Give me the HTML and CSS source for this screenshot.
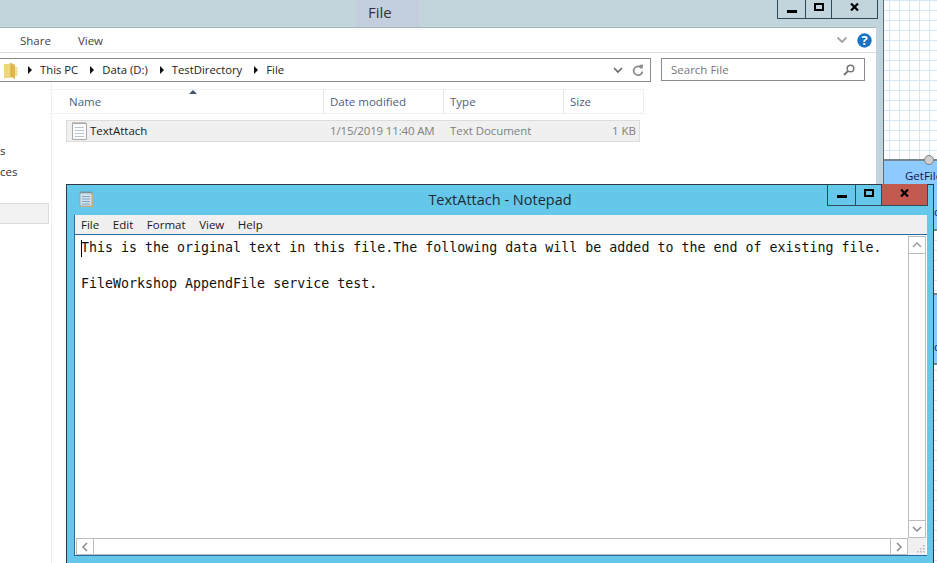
FILE: index.html
```html
<!DOCTYPE html>
<html lang="en">
<head>
<meta charset="utf-8">
<title>TextAttach - Notepad</title>
<link rel="stylesheet" href="styles.css">
</head>
<body>
<div class="desktop">
  <div class="canvas">
    <div class="node node-a"><span class="node-title">GetFile</span><span class="node-mark mark-a">c</span></div>
    <div class="node node-b"><span class="node-mark mark-b">c</span></div>
    <div class="pin"></div>
  </div>

  <section class="explorer">
    <header class="ex-title">
      <span class="ex-title-text">File</span>
      <div class="caption ex-caption">
        <span class="cap-btn cap-min"><svg width="10" height="3"><rect width="10" height="3" fill="#000"/></svg></span>
        <span class="cap-btn cap-max"><svg width="10" height="8"><rect x="1" y="1" width="8" height="6" fill="none" stroke="#000" stroke-width="2"/></svg></span>
        <span class="cap-btn cap-close"><svg width="9" height="8" viewBox="0 0 9 8"><path d="M1 0.5 L8 7.5 M8 0.5 L1 7.5" stroke="#000" stroke-width="2.2"/></svg></span>
      </div>
    </header>
    <div class="ex-body">
      <nav class="ribbon">
        <span class="tab tab-share">Share</span>
        <span class="tab tab-view">View</span>
        <svg class="rib-chevron" width="12" height="8" viewBox="0 0 12 8"><path d="M1.5 1.5 L6 6 L10.5 1.5" fill="none" stroke="#a4a4a4" stroke-width="1.8"/></svg>
        <svg class="help" width="15" height="15" viewBox="0 0 15 15"><circle cx="7.5" cy="7.5" r="7.2" fill="#1a73c4"/><text x="7.5" y="12" class="help-q" text-anchor="middle">?</text></svg>
      </nav>
      <div class="path-row">
        <div class="address">
          <svg class="folder" width="14" height="17" viewBox="0 0 14 17"><path d="M0 2 H5 L6 1 H7 V16 H1 Q0 16 0 15 Z" fill="#eed67a"/><path d="M7 1 L11 3 V17 L7 15 Z" fill="#e0b84a"/><path d="M11 5 H13.5 V14 H11 Z" fill="#f3df96"/><path d="M7 1 V15" stroke="#c9a23c" stroke-width="0.7"/></svg>
          <span class="crumbs">
            <i class="tri"></i><span>This PC</span>
            <i class="tri"></i><span>Data (D:)</span>
            <i class="tri"></i><span>TestDirectory</span>
            <i class="tri"></i><span>File</span>
          </span>
          <svg class="addr-chevron" width="10" height="7" viewBox="0 0 10 7"><path d="M1 1 L5 5 L9 1" fill="none" stroke="#666" stroke-width="1.6"/></svg>
          <svg class="refresh" width="12" height="13" viewBox="0 0 12 13"><path d="M9.6 4.2 A4.4 4.4 0 1 0 10.4 7.5" fill="none" stroke="#8a8a8a" stroke-width="1.7"/><path d="M7 1 L11 0.5 L10.6 5 Z" fill="#8a8a8a"/></svg>
        </div>
        <div class="search">
          <span class="search-text">Search File</span>
          <svg width="12" height="12" viewBox="0 0 12 12"><circle cx="7.5" cy="4.5" r="3.3" fill="none" stroke="#777" stroke-width="1.5"/><path d="M5 7 L1 11" stroke="#777" stroke-width="2"/></svg>
        </div>
      </div>
      <div class="ex-main">
        <aside class="nav-pane">
          <div class="nav-item nav-first">s</div>
          <div class="nav-item">ces</div>
          <div class="nav-selected"></div>
        </aside>
        <div class="files">
          <i class="sort-arrow"></i>
          <div class="col-head">
            <span class="col col-name">Name</span>
            <span class="col col-date">Date modified</span>
            <span class="col col-type">Type</span>
            <span class="col col-size">Size</span>
          </div>
          <div class="file-row">
            <span class="cell cell-name">
              <svg width="15" height="18" viewBox="0 0 15 18"><path d="M0.5 1.5 H14.5 V17.5 H0.5 Z" fill="#fbfbfb" stroke="#a9a9a9"/><path d="M3 5.5 H12 M3 8.5 H12 M3 11.5 H12 M3 14.5 H12" stroke="#b9c6d2"/><path d="M1 1 V0 M3 1 V0 M5 1 V0 M7 1 V0 M9 1 V0 M11 1 V0 M13 1 V0" stroke="#999"/></svg>
              <span class="file-name">TextAttach</span>
            </span>
            <span class="cell cell-date">1/15/2019 11:40 AM</span>
            <span class="cell cell-type">Text Document</span>
            <span class="cell cell-size">1 KB</span>
          </div>
        </div>
      </div>
    </div>
  </section>

  <section class="notepad">
    <header class="np-title">
      <svg class="np-icon" width="14" height="16" viewBox="0 0 14 16"><path d="M1 2 H13 V15 H1 Z" fill="#cfe4ee" stroke="#8d9ba3" stroke-width="0.8"/><path d="M13.5 3 V15.5 H2" fill="none" stroke="#c9b27f"/><path d="M3 5.5 H11 M3 8 H11 M3 10.5 H11 M3 13 H11" stroke="#7fa6bf"/><path d="M2 2 V0.5 M4 2 V0.5 M6 2 V0.5 M8 2 V0.5 M10 2 V0.5 M12 2 V0.5" stroke="#777"/></svg>
      <span class="np-title-text">TextAttach - Notepad</span>
      <div class="caption np-caption">
        <span class="cap-btn cap-min"><svg width="10" height="3"><rect width="10" height="3" fill="#000"/></svg></span>
        <span class="cap-btn cap-max"><svg width="10" height="8"><rect x="1" y="1" width="8" height="6" fill="none" stroke="#000" stroke-width="2"/></svg></span>
        <span class="cap-btn cap-close np-close"><svg width="9" height="8" viewBox="0 0 9 8"><path d="M1 0.5 L8 7.5 M8 0.5 L1 7.5" stroke="#000" stroke-width="2.2"/></svg></span>
      </div>
    </header>
    <div class="np-client">
      <div class="menu">
        <span>File</span><span>Edit</span><span>Format</span><span>View</span><span>Help</span>
      </div>
      <div class="editor">
        <div class="edit-top">
          <pre class="text"><i class="caret"></i>This is the original text in this file.The following data will be added to the end of existing file.

FileWorkshop AppendFile service test.</pre>
          <div class="vscroll">
            <span class="sb-btn sb-up"><svg width="10" height="6" viewBox="0 0 10 6"><path d="M1 5 L5 1 L9 5" fill="none" stroke="#a0a0a0" stroke-width="1.5"/></svg></span>
            <span class="sb-btn sb-down"><svg width="10" height="6" viewBox="0 0 10 6"><path d="M1 1 L5 5 L9 1" fill="none" stroke="#8a8a8a" stroke-width="1.5"/></svg></span>
          </div>
        </div>
        <div class="edit-bottom">
          <div class="hscroll">
            <span class="sb-btn sb-left"><svg width="6" height="10" viewBox="0 0 6 10"><path d="M5 1 L1 5 L5 9" fill="none" stroke="#8a8a8a" stroke-width="1.5"/></svg></span>
            <span class="sb-btn sb-right"><svg width="6" height="10" viewBox="0 0 6 10"><path d="M1 1 L5 5 L1 9" fill="none" stroke="#8a8a8a" stroke-width="1.5"/></svg></span>
          </div>
          <div class="grip"><svg width="10" height="10" viewBox="0 0 10 10"><path d="M8 1h1.5v1.5H8z M5 4h1.5v1.5H5z M8 4h1.5v1.5H8z M2 7h1.5v1.5H2z M5 7h1.5v1.5H5z M8 7h1.5v1.5H8z" fill="#b5b5b5"/></svg></div>
        </div>
      </div>
    </div>
  </section>
</div>
</body>
</html>
```

FILE: styles.css
```css
* { box-sizing: border-box; }
html, body { margin: 0; padding: 0; height: 100%; overflow: hidden; background: #fff; }
body { font-family: "Open Sans", "Noto Sans", sans-serif; font-size: 11.5px; color: #1e2a38; }
.desktop { position: relative; width: 937px; height: 563px; overflow: hidden; }

/* designer canvas behind the windows */
.canvas {
  position: absolute; left: 883px; top: 0; width: 54px; height: 563px;
  border-left: 1px solid #5c6c72;
  background-color: #fff;
  background-image:
    repeating-linear-gradient(90deg, transparent 0 5px, #d6e6f8 5px 6px, transparent 6px 10px),
    repeating-linear-gradient(0deg, transparent 0 2px, #d6e6f8 2px 3px, transparent 3px 10px);
}
.node { position: absolute; left: 0; right: 0; background: #8ccaff; border-top: 2px solid #77858f; border-bottom: 2px solid #77858f; color: #16124f; }
.node-a { top: 159px; height: 72px; }
.node-b { top: 293px; height: 72px; }
.node-title { position: absolute; left: 21px; top: 7px; font-size: 11.5px; white-space: nowrap; }
.node-mark { position: absolute; left: 50px; color: #1a10a8; font-size: 11.5px; }
.mark-a { top: 43px; }
.mark-b { top: 44px; }
.pin { position: absolute; left: 40px; top: 155px; width: 10px; height: 10px; border-radius: 50%; background: #cfcfcf; border: 1px solid #7f7f7f; }

/* explorer window */
.explorer { position: absolute; left: 0; top: 0; width: 883px; height: 563px; background: #c3d5dc; padding-right: 7px; display: flex; flex-direction: column; }
.ex-title { position: relative; height: 28px; flex: none; border-bottom: 1px solid #a6b6bd; }
.ex-title-text { position: absolute; left: 356px; top: 0; width: 63px; height: 27px; padding-left: 12px; background: #c3cfdf; color: #333; font-size: 15px; line-height: 25px; }
.caption { position: absolute; display: flex; border: 1px solid #2f4a58; border-top: 0; }
.ex-caption { left: 777px; top: 0; height: 19px; width: 101px; }
.cap-btn { display: flex; align-items: center; justify-content: center; height: 100%; }
.cap-min { width: 28px; border-right: 1px solid #2f4a58; padding-top: 4px; }
.cap-max { width: 26px; border-right: 1px solid #2f4a58; padding-bottom: 4px; }
.cap-close { flex: 1; padding-bottom: 4px; }
.ex-body { flex: 1; background: #fff; display: flex; flex-direction: column; min-height: 0; }

.ribbon { height: 25px; flex: none; border-bottom: 1px solid #dcdcdc; display: flex; align-items: center; color: #444; }
.tab-share { margin-left: 20px; }
.tab-view { margin-left: 27px; }
.rib-chevron { margin-left: auto; margin-right: 9px; }
.help { margin-right: 4px; }
.help-q { font-family: "Open Sans", sans-serif; font-size: 13px; font-weight: 700; fill: #fff; }

.path-row { display: flex; margin-top: 5px; flex: none; }
.address { width: 651px; height: 24px; border: 1px solid #8b8b8b; border-left: 0; display: flex; align-items: center; padding-left: 4px; }
.crumbs { display: flex; align-items: center; color: #222; margin-left: 10px; font-size: 11.3px; padding-bottom: 2px; }
.tri { width: 0; height: 0; border-left: 4px solid #111; border-top: 4px solid transparent; border-bottom: 4px solid transparent; margin: 2px 8px 0 0; }
.crumbs span { margin-right: 12px; }
.addr-chevron { margin-left: auto; margin-right: 9px; }
.refresh { margin-right: 6px; }
.search { width: 204px; height: 23px; margin-left: 10px; border: 1px solid #8b8b8b; display: flex; align-items: center; padding: 0 9px; justify-content: space-between; color: #777; }

.ex-main { flex: 1; display: flex; min-height: 0; position: relative; }
.nav-pane { width: 52px; flex: none; border-right: 1px solid #f0f0f0; }
.nav-item { text-align: right; padding-right: 37px; color: #333; height: 21px; line-height: 21px; white-space: nowrap; }
.nav-first { margin-top: 58px; padding-right: 47px; }
.nav-selected { height: 21px; width: 49px; margin-top: 21px; background: #f2f2f2; border: 1px solid #dcdcdc; border-left: 0; }
.files { position: relative; flex: 1; padding-top: 7px; }
.sort-arrow { position: absolute; left: 137px; top: 8px; width: 0; height: 0; border-left: 4px solid transparent; border-right: 4px solid transparent; border-bottom: 4px solid #43566e; }
.col-head { display: flex; width: 592px; height: 25px; border: 1px solid #efefef; border-left: 0; color: #4d6082; }
.col { display: flex; align-items: center; padding-left: 6px; border-right: 1px solid #e4e4e4; }
.col-name { width: 272px; padding-left: 17px; }
.col-date { width: 120px; }
.col-type { width: 120px; }
.col-size { flex: 1; border-right: 0; }
.file-row { display: flex; align-items: center; width: 574px; height: 22px; margin: 6px 0 0 14px; padding-bottom: 1px; background: #f0f0f0; border: 1px solid #dcdcdc; color: #808080; }
.cell { white-space: nowrap; }
.cell-name { width: 263px; display: flex; align-items: center; padding-left: 5px; }
.file-name { margin-left: 3px; color: #1a1a1a; }
.cell-date { width: 120px; letter-spacing: -0.16px; }
.cell-type { width: 120px; letter-spacing: -0.05px; }
.cell-size { flex: 1; text-align: right; padding-right: 3px; }

/* notepad window */
.notepad { position: absolute; left: 66px; top: 184px; width: 868px; height: 390px; background: #65c8ea; border: 1px solid #2e3a40; border-bottom: 0; padding: 0 6px 0 7px; }
.np-title { position: relative; height: 30px; }
.np-icon { position: absolute; left: 5px; top: 6px; }
.np-title-text { display: block; text-align: center; font-size: 14.5px; line-height: 29px; color: #1c2a33; padding-right: 1px; }
.np-caption { right: -1px; top: -1px; height: 22px; width: 101px; }
.np-caption .cap-min { padding-top: 4px; }
.np-close { background: #c25a50; border-left: 0; }
.np-client { width: 853px; height: 341px; border: 1px solid #2b6a9e; border-top: 0; border-right: 0; background: #fff; margin-right: 0; }
.menu { height: 20px; background: #f0f0f0; display: flex; align-items: center; color: #1a1a1a; padding-left: 6px; gap: 13.6px; border-bottom: 1px solid #2b6a9e; }
.editor { display: flex; flex-direction: column; height: 320px; padding: 1px 1px 0 1px; }
.edit-top { flex: 1; display: flex; min-height: 0; }
.text { flex: 1; margin: 0; padding: 3px 0 0 5px; position: relative; font-family: "DejaVu Sans Mono", monospace; font-size: 13.3px; line-height: 18px; color: #111; }
.caret { position: absolute; left: 5px; top: 4px; width: 1px; height: 17px; background: #000; }
.vscroll { width: 18px; border: 1px solid #bdbdbd; border-right-width: 1px; display: flex; flex-direction: column; justify-content: space-between; }
.sb-btn { display: flex; align-items: center; justify-content: center; }
.sb-up, .sb-down { height: 17px; }
.sb-up { border-bottom: 1px solid #bdbdbd; }
.sb-down { border-top: 1px solid #bdbdbd; }
.edit-bottom { display: flex; height: 17px; flex: none; }
.hscroll { flex: 1; border: 1px solid #bdbdbd; display: flex; justify-content: space-between; }
.sb-left, .sb-right { width: 17px; }
.sb-left { border-right: 1px solid #bdbdbd; }
.sb-right { border-left: 1px solid #bdbdbd; }
.grip { width: 18px; background: #f0f0f0; display: flex; align-items: flex-end; justify-content: flex-end; padding: 0 1px 1px 0; }
```
